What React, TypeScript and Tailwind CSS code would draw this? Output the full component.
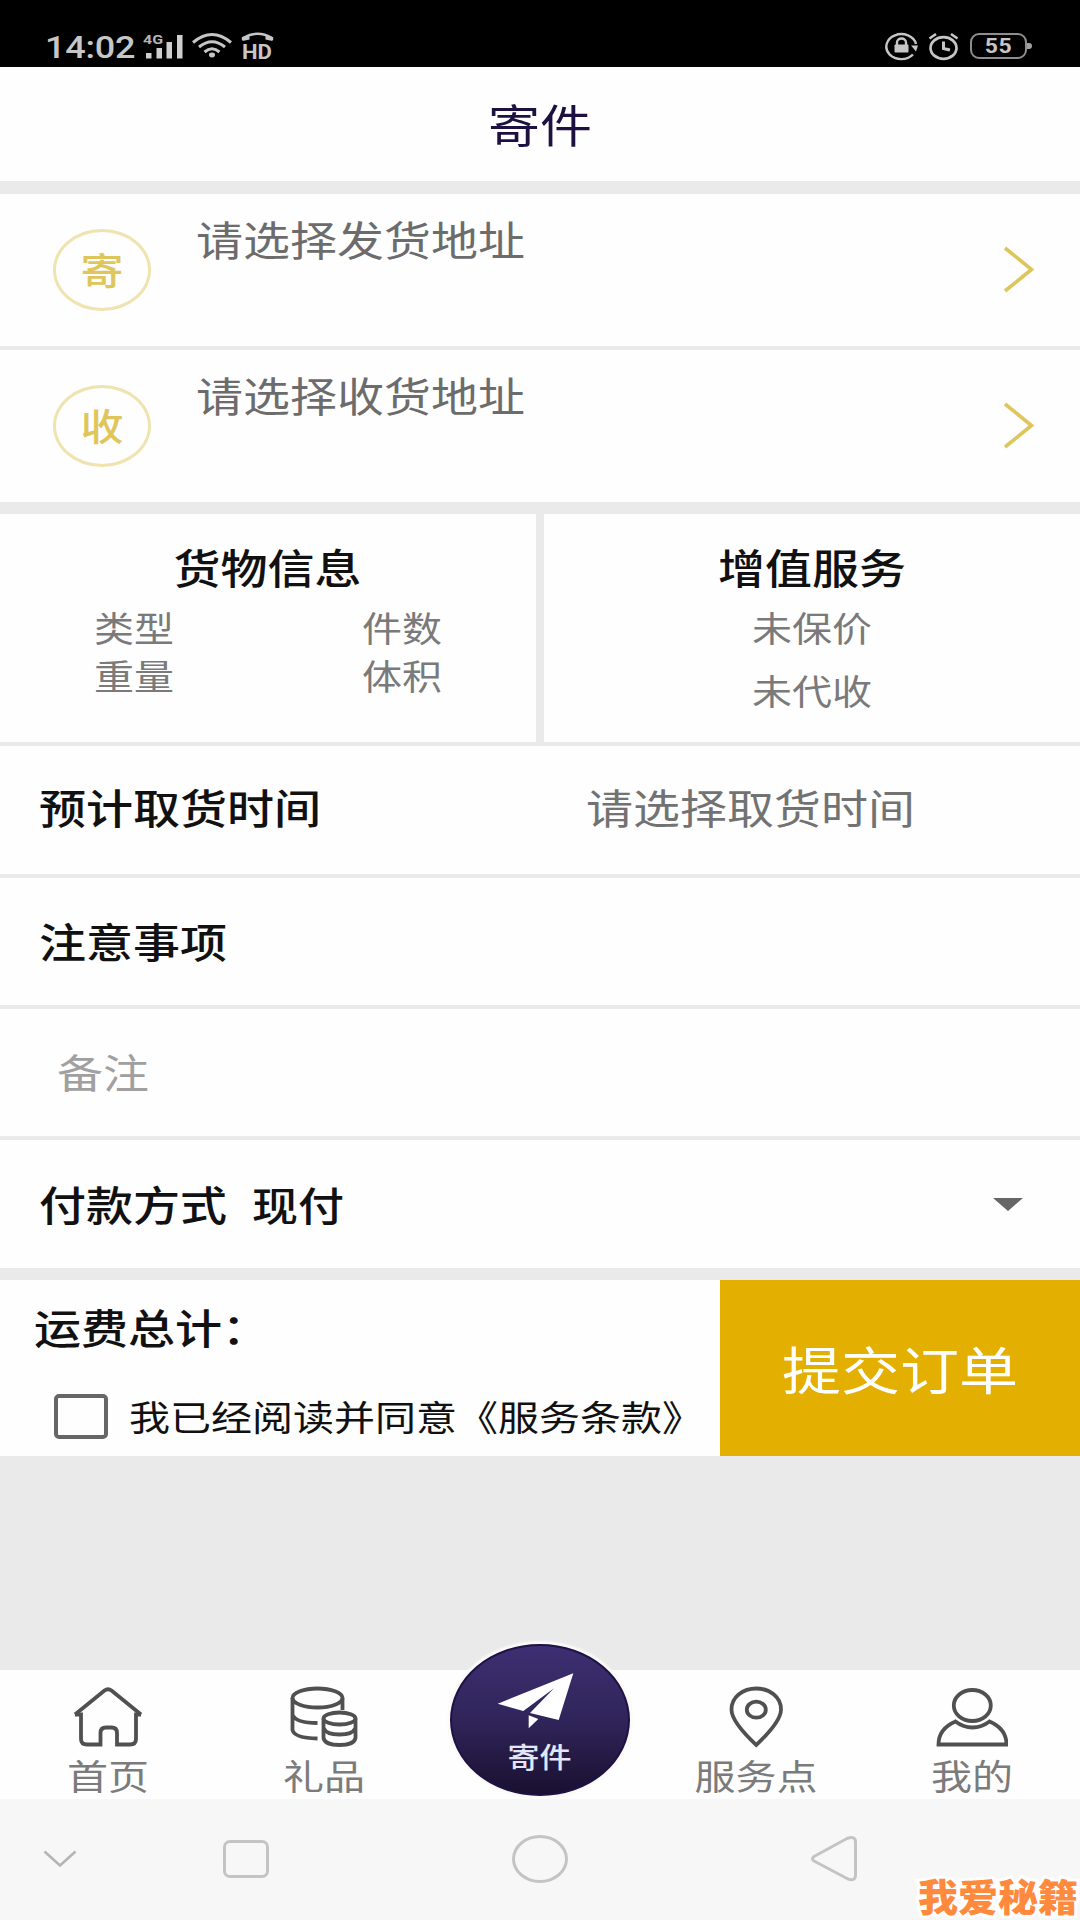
import { useState } from 'react';
import type { ReactNode } from 'react';
import clsx from 'clsx';

type TProps = { children: ReactNode; className?: string };

// single line of text, slightly flattened like the rest of the ui
function T({ children, className }: TProps) {
  return (
    <span className={clsx('inline-block whitespace-nowrap leading-none scale-y-[0.87]', className)}>{children}</span>
  );
}

function StatusBar() {
  return (
    <div className="h-[67px] bg-black flex justify-between items-start pt-[31px] pl-[45px] pr-[48px] text-[#c6c6c6]">
      <div className="flex items-start">
        <div className="w-[97px] h-[31px] flex items-center">
          <T className="font-['Roboto'] text-[36px] font-medium tracking-[-0.2px] translate-y-[1px]">14:02</T>
        </div>
        <svg width="46" height="30" viewBox="0 0 46 30" fill="#cfcfcf">
          <text x="1" y="12.5" fontSize="12" fontWeight="700" fontFamily="Roboto, sans-serif" textLength="20" lengthAdjust="spacingAndGlyphs" fill="#b5b5b5">4G</text>
          <rect x="4" y="22" width="5.5" height="5.5" />
          <rect x="14.5" y="17" width="5.500" height="10.5" />
          <rect x="24.5" y="11" width="5.500" height="16.5" />
          <rect x="35" y="4" width="5.500" height="23.5" />
        </svg>
        <svg className="ml-[3px]" width="42" height="30" viewBox="0 0 42 30" fill="none" stroke="#c6c6c6" strokeWidth="3">
          <path d="M2 11.5Q21 -4.5 40 11.5" />
          <path d="M8 16Q21 5.5 34 16" />
          <path d="M13.5 21Q21 14.5 28.5 21" />
          <ellipse cx="21" cy="24" rx="3" ry="2.4" fill="#c6c6c6" stroke="none" />
        </svg>
        <svg className="ml-[8px]" width="34" height="34" viewBox="0 0 34 34">
          <path d="M2 9V7Q16.500 -1.500 31 7V9" fill="none" stroke="#c6c6c6" strokeWidth="2.4" />
          <path d="M1.500 6l7-2v4.500l-7 1.500zM31.500 6l-7-2v4.500l7 1.500z" fill="#c6c6c6" />
          <text x="1" y="28" fontSize="20" fontWeight="700" fontFamily="Roboto, sans-serif" textLength="30" lengthAdjust="spacingAndGlyphs" fill="#c6c6c6">HD</text>
        </svg>
      </div>
      <div className="flex items-start">
        <svg width="36" height="30" viewBox="0 0 36 30" fill="none" stroke="#c6c6c6" strokeWidth="2.4">
          <path d="M29 23.500A15 12.500 0 1 1 32 13" />
          <path d="M27 14.500h7l-2 6z" fill="#c6c6c6" stroke="none" />
          <rect x="10.500" y="13.500" width="14" height="8" rx="1" fill="#c6c6c6" stroke="none" />
          <path d="M13 14v-2.500a4.500 4 0 0 1 9 0v2.500" />
        </svg>
        <svg className="ml-[8px]" width="31" height="30" viewBox="0 0 31 30" fill="none" stroke="#c6c6c6">
          <ellipse cx="15.500" cy="17" rx="13" ry="10.800" strokeWidth="2.700" />
          <path d="M1.500 7.500l6.500-4.500M29.500 7.500L23 3" strokeWidth="2.600" />
          <path d="M15.500 10.500v7l6.500 1.500" strokeWidth="3" />
        </svg>
        <div className="ml-[11px] mt-[2px] w-[57px] h-[26px] border-[2.500px] border-[#8e8e8e] rounded-[9px] flex items-center justify-center">
          <T className="font-['Roboto'] text-[23px] font-bold tracking-[0.5px]">55</T>
        </div>
        <div className="mt-[12px] w-[5px] h-[6px] rounded-r-full bg-[#a0a0a0]" />
      </div>
    </div>
  );
}

function AddressRow({ mark, text }: { mark: string; text: string }) {
  return (
    <div className="h-[152px] flex items-start bg-[#fefefe]">
      <div className="ml-[53px] mt-[35px] w-[98px] h-[82px] rounded-[50%] border-[3px] border-[#efe3b0] flex items-center justify-center">
        <T className="text-[43px] font-medium text-[#dfc65c] translate-y-[-2px]">{mark}</T>
      </div>
      <T className="ml-[45px] mt-[21px] text-[47px] text-[#6c6c6c]">{text}</T>
      <svg className="ml-auto mr-[45px] mt-[51px]" width="33" height="49" viewBox="0 0 33 49" fill="none" stroke="#dec55c" strokeWidth="3.600">
        <path d="M3 3L29.500 24.500L3 46" />
      </svg>
    </div>
  );
}

function HomeIcon() {
  return (
    <>
      <path d="M3 28.500L32.500 4.500Q36 2 39.500 4.500L69 28.500" />
      <path d="M3 28.500H9V53Q9 58.500 15 58.500H28.500V47Q28.500 41.500 34 41.500H39.500Q45 41.500 45 47V58.500H58Q64 58.500 64 53V28.500H69" />
    </>
  );
}

function CoinsIcon() {
  return (
    <>
      <ellipse cx="29.500" cy="12" rx="25" ry="9.500" />
      <path d="M4.500 12V44Q6 52 29.500 52.500M4.500 29Q8 37 29.500 37M54.500 12V24" />
      <ellipse cx="51.500" cy="32.500" rx="16" ry="6" />
      <path d="M35.500 32.500V52Q37 59 51.500 59T67.500 52V32.500M35.500 42Q38 48.500 51.500 48.500T67.500 42" />
    </>
  );
}

function PinIcon() {
  return (
    <>
      <path d="M36.300 59C31 54 11.500 36 11.500 23.500C11.500 11 23 2.500 36.300 2.500S61 11 61 23.500C61 36 41.500 54 36.300 59Z" />
      <ellipse cx="36.300" cy="23.700" rx="9.500" ry="8" />
    </>
  );
}

function UserIcon() {
  return (
    <>
      <ellipse cx="36.300" cy="19.500" rx="18.500" ry="15.500" />
      <path d="M19.500 35.500C9 40 2.500 48 2.500 58.500H70.500C70.500 48 64 40 53.500 35.500C43 43.500 30 43.500 19.500 35.500Z" />
    </>
  );
}

function TabItem({ label, children }: { label: string; children: ReactNode }) {
  return (
    <div className="flex flex-col items-center pt-[16px]">
      <svg width="72" height="62" viewBox="0 0 72 62" fill="none" stroke="#505050" strokeWidth="3.800">{children}</svg>
      <T className="mt-[6px] text-[41px] text-[#7b7b7b]">{label}</T>
    </div>
  );
}

function TabBar() {
  return (
    <nav className="h-[129px] bg-[#fefefe] grid grid-cols-5">
      <TabItem label="首页"><HomeIcon /></TabItem>
      <TabItem label="礼品"><CoinsIcon /></TabItem>
      <div className="flex justify-center">
        <div className="-mt-[26px] w-[180px] h-[152px] shrink-0 rounded-[50%] bg-linear-to-b from-[#3d2f72] via-[#30255a] to-[#1a1030] border-2 border-[#1f1245] shadow-[0_0_2px_3px_#fafaf8] flex flex-col items-center">
          <svg className="mt-[25px] mr-[8px]" width="80" height="60" viewBox="46 26 80 60" fill="#ffffff">
            <path d="M123.300 28.300L47.700 58.700L73.300 66L104 43.300L80 68L108.700 75Z" />
            <path d="M78.700 70.300L88.300 74L78.700 83.300Z" />
          </svg>
          <T className="mt-[9px] mr-[1px] text-[32px] font-medium text-[#e3e6f6]">寄件</T>
        </div>
      </div>
      <TabItem label="服务点"><PinIcon /></TabItem>
      <TabItem label="我的"><UserIcon /></TabItem>
    </nav>
  );
}

function SystemBar() {
  return (
    <div className="relative h-[121px] pb-[2px] bg-[#f7f7f7] flex items-center">
      <svg className="ml-[43px]" width="34" height="18" viewBox="0 0 34 18" fill="none" stroke="#b5b5b5" strokeWidth="2.600">
        <path d="M1.500 1.500L17 15.500L32.500 1.500" />
      </svg>
      <div className="ml-[146px] w-[46px] h-[38px] border-[3px] border-[#c4c4c4] rounded-[7px]" />
      <div className="ml-[243px] w-[56px] h-[48px] border-[3px] border-[#c4c4c4] rounded-[50%]" />
      <svg className="ml-[242px]" width="48" height="48" viewBox="0 0 48 48" fill="none" stroke="#c4c4c4" strokeWidth="3" strokeLinejoin="round">
        <path d="M4 21.500L37 3.500Q45.500 0.500 45.500 7V40Q45.500 46.500 38 44L4 26Q1 24 4 21.500Z" />
      </svg>
      <div className="absolute right-[2px] bottom-[5px] flex">
        <T className="text-[40px] font-black text-[#ff8a3d] scale-y-[0.95] [-webkit-text-stroke:6px_#ffffff] [paint-order:stroke]">我爱秘籍</T>
      </div>
    </div>
  );
}

export default function App() {
  const [agreed, setAgreed] = useState(false);

  return (
    <div className="w-[1080px] h-[1920px] overflow-hidden flex flex-col bg-[#eaeaea] font-['Noto_Sans_CJK_SC',sans-serif] text-[#111111]">
      <StatusBar />

      <header className="h-[114px] bg-[#fefefe] flex items-center justify-center">
        <T className="text-[52px] text-[#1c1140]">寄件</T>
      </header>

      <div className="mt-[13px] flex flex-col gap-[4px]">
        <AddressRow mark="寄" text="请选择发货地址" />
        <AddressRow mark="收" text="请选择收货地址" />
      </div>

      <section className="mt-[12px] h-[228px] grid grid-cols-2 gap-[8px] text-[40px] text-[#7a7a7a]">
        <div className="bg-[#fefefe] flex flex-col items-center pt-[29px]">
          <T className="mr-[1px] text-[47px] font-medium text-[#111111]">货物信息</T>
          <div className="w-full mt-[17px] grid grid-cols-2 gap-y-[8px] justify-items-center">
            <T>类型</T>
            <T>件数</T>
            <T>重量</T>
            <T>体积</T>
          </div>
        </div>
        <div className="bg-[#fefefe] flex flex-col items-center pt-[29px]">
          <T className="text-[47px] font-medium text-[#111111]">增值服务</T>
          <T className="mt-[17px]">未保价</T>
          <T className="mt-[23px]">未代收</T>
        </div>
      </section>

      <section className="mt-[4px] flex flex-col gap-[4px] text-[47px]">
        <div className="h-[128px] pb-[7px] bg-[#fefefe] flex items-center pl-[39px]">
          <T className="w-[547px] font-medium">预计取货时间</T>
          <T className="text-[#727272]">请选择取货时间</T>
        </div>
        <div className="h-[127px] pb-[2px] bg-[#fefefe] flex items-center pl-[39px]">
          <T className="font-medium">注意事项</T>
        </div>
        <div className="h-[127px] pb-[3px] bg-[#fefefe] flex items-center pl-[57px]">
          <T className="text-[46px] text-[#a0a0a0]">备注</T>
        </div>
        <div className="h-[128px] pb-[1px] bg-[#fefefe] flex items-center pl-[39px] pr-[57px]">
          <T className="font-medium">付款方式</T>
          <T className="ml-[25px] text-[46px] font-medium">现付</T>
          <svg className="ml-auto mt-[2px]" width="30" height="13" viewBox="0 0 30 13" fill="#666666">
            <path d="M0 0H30L15 13Z" />
          </svg>
        </div>
      </section>

      <section className="mt-[12px] h-[176px] flex">
        <div className="w-[720px] bg-[#fefefe] pt-[23px]">
          <div className="pl-[34px] flex">
            <T className="text-[47px] font-medium">运费总计：</T>
          </div>
          <div className="mt-[44px] pl-[54px] h-[45px] flex items-center">
            <button
              onClick={() => setAgreed(!agreed)}
              className={clsx('w-[54px] h-[45px] rounded-[5px] border-[4px] border-[#666666]', agreed && 'bg-[#666666]')}
            />
            <T className="ml-[21px] text-[41px] translate-y-[-1px]">我已经阅读并同意《服务条款》</T>
          </div>
        </div>
        <button className="w-[360px] bg-[#e3af00] flex items-center justify-center">
          <T className="text-[59px] text-white translate-y-[-1px]">提交订单</T>
        </button>
      </section>

      <div className="h-[214px]" />
      <TabBar />
      <SystemBar />
    </div>
  );
}
